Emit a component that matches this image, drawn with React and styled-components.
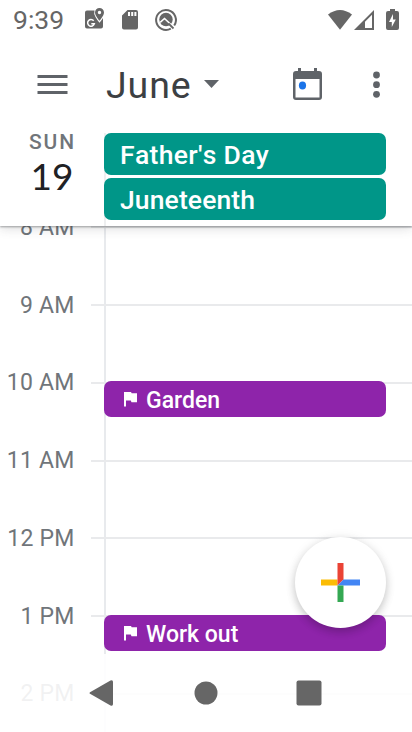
import React from "react";
import styled, { createGlobalStyle } from "styled-components";

const GlobalStyle = createGlobalStyle`
  * { box-sizing: border-box; }
  body { margin: 0; background: #fff; font-family: Roboto, "Liberation Sans", sans-serif; }
`;

const Screen = styled.main`
  position: relative;
  display: flex;
  flex-direction: column;
  width: 412px;
  height: 732px;
  overflow: hidden;
  background: #fff;
`;

const StatusBar = styled.div`
  display: flex;
  align-items: center;
  justify-content: space-between;
  flex: none;
  height: 40px;
  padding: 0 12px 0 13px;
  color: #666;
`;

const StatusGroup = styled.div`
  display: flex;
  align-items: center;
  svg { display: block; }
`;

const Clock = styled.span`
  width: 71px;
  font-size: 26.5px;
  line-height: 40px;
`;

const Toolbar = styled.header`
  display: flex;
  align-items: center;
  flex: none;
  height: 90px;
  padding-left: 37px;
`;

const IconButton = styled.button`
  display: block;
  flex: none;
  padding: 0;
  border: 0;
  background: none;
  color: #5f6368;
  line-height: 0;
  margin-left: ${(p) => p.$gap || 0}px;
`;

const MonthPicker = styled.div`
  display: flex;
  align-items: center;
  width: 185px;
  margin-left: 37px;
  gap: 12px;
  color: #3c4043;
  svg { margin: -2px 0 0 1px; }
`;

const Month = styled.h1`
  width: 86px;
  margin: 0;
  padding-left: 1px;
  font: 400 37.5px/40px Roboto, sans-serif;
  letter-spacing: 0.9px;
  white-space: nowrap;
`;

const DayHeader = styled.section`
  position: relative;
  z-index: 1;
  display: flex;
  flex: none;
  height: 96px;
  background: #fff;
  box-shadow: 0 1px 2px rgba(60, 64, 67, 0.45), 0 3px 10px rgba(60, 64, 67, 0.16);
  clip-path: inset(0 0 -20px 0);
`;

const DateBlock = styled.div`
  display: flex;
  flex-direction: column;
  align-items: center;
  width: 104px;
`;

const Weekday = styled.span`
  height: 24px;
  font-size: 21px;
  font-weight: 500;
  line-height: 24px;
  letter-spacing: 1.8px;
  color: #70757a;
  padding-left: 1px;
`;

const DayNumber = styled.span`
  font: 400 37px/44px Lato, sans-serif;
  color: #202124;
`;

const AllDay = styled.div`
  display: flex;
  flex-direction: column;
  gap: 3px;
  width: 282px;
  height: 93px;
  margin-top: 3px;
  background: linear-gradient(#eeeff0, #eeeff0) 0 0 / 2px 100% no-repeat;
`;

const AllDayEvent = styled.div`
  height: 42px;
  padding-left: 16px;
  border-radius: 7px;
  background: #009688;
  color: #fff;
  font-size: 26.5px;
  font-weight: 500;
  font-kerning: none;
  letter-spacing: ${(p) => p.$tracking}px;
  line-height: 43.5px;
`;

const Timeline = styled.section`
  position: relative;
  flex: 1;
  min-height: 0;
  overflow: hidden;
  background: linear-gradient(#e8eaed, #e8eaed) 104px 0 / 2px 100% no-repeat;
`;

const HourRow = styled.div`
  display: flex;
  justify-content: space-between;
  height: 77.75px;
`;

const HourLabel = styled.span`
  width: 74.5px;
  height: 30px;
  margin-top: -13.25px;
  text-align: right;
  color: #70757a;
  font-size: 23px;
  line-height: 30px;
  letter-spacing: 0.2px;
`;

const HourLine = styled.div`
  width: 321px;
  height: 2px;
  margin-top: 0.25px;
  background: #e9eaec;
`;

const TimedEvent = styled.div`
  position: absolute;
  left: 104px;
  top: ${(p) => p.$top}px;
  display: flex;
  align-items: center;
  gap: 9px;
  width: 282px;
  height: 36px;
  padding: 3px 0 0 19px;
  border-radius: 7px;
  background: #8e24aa;
  color: #fff;
  font-size: 23px;
  font-weight: 500;
  line-height: 38px;
  svg { margin-top: -3px; }
`;

const AddButton = styled.button`
  position: absolute;
  left: 295px;
  top: 537px;
  display: grid;
  place-items: center;
  width: 91px;
  height: 91px;
  padding: 0;
  border: 0;
  border-radius: 50%;
  background: #fff;
  box-shadow: 0 4px 8px rgba(0, 0, 0, 0.18), 0 1px 12px rgba(0, 0, 0, 0.08);
  z-index: 3;
`;

const NavBar = styled.nav`
  position: absolute;
  z-index: 2;
  left: 0;
  bottom: 0;
  display: flex;
  align-items: center;
  width: 412px;
  height: 78px;
  padding-left: 89px;
  background: rgba(255, 255, 255, 0.9);
  svg { display: block; }
  svg:nth-child(2) { margin: 0 78px 0 81px; }
`;

const HOURS = ["8 AM", "9 AM", "10 AM", "11 AM", "12 PM", "1 PM", "2 PM"];
const EVENTS = [
  { title: "Garden", top: 155 },
  { title: "Work out", top: 389 },
];

const Flag = () => (
  <svg width="14" height="16" viewBox="0 0 14 16" fill="#fff">
    <path d="M1 1h7l.7 1.200H14v9H8.500L7.800 9.500H3v6H1z" />
  </svg>
);

const StatusIcons = () => (
  <svg width="96" height="26" viewBox="84 7 96 26" fill="#666">
    <path d="M87 10.500h7.500q-1 3 1 6.500 1.600 3 4 5.800 2-2.300 3.500-4.800v8.500q0 2-2 2H87q-2 0-2-2v-14q0-2 2-2z" />
    <path fillRule="evenodd" d="M99.500 8a4.500 4.500 0 0 1 4.500 4.500c0 3.200-4.500 8.300-4.500 8.300S95 15.700 95 12.500A4.500 4.500 0 0 1 99.500 8zm0 2.800a1.700 1.700 0 1 0 0 3.400 1.700 1.700 0 0 0 0-3.400z" />
    <path d="M93.700 20.700a3.400 3.400 0 1 0 .6 3.100H91.300" fill="none" stroke="#fff" strokeWidth="1.500" />
    <path fillRule="evenodd" d="M127.500 10H136q2 0 2 2v15.500q0 2-2 2h-12q-2 0-2-2V15.500zM128 12v4h2v-4zm3.200 0v4h2v-4zm3.200 0v4h2v-4z" />
    <path d="M174.200 25.500A9.900 9.900 0 1 0 170.800 28.600" fill="none" stroke="#666" strokeWidth="2" />
    <circle cx="166" cy="19.500" r="6.700" />
    <path d="M160.200 22.300l4.300-3.800 8 7.500" fill="none" stroke="#fff" strokeWidth="1.600" />
    <path d="M168.500 23.500l5 5" stroke="#666" strokeWidth="1.800" />
  </svg>
);

const SystemIcons = () => (
  <svg width="76" height="24" viewBox="324 7 76 24" fill="#666">
    <path d="M328 13.500Q340 4.500 352 13.500L340 28.700z" />
    <path fillRule="evenodd" d="M354 29l20-20v20zm11-8.200V27h7V13.800z" />
    <path fillRule="evenodd" d="M390 8h5v2h2q2 0 2 2v15q0 2-2 2h-9q-2 0-2-2V12q0-2 2-2h2zM393 13l-4 8h2.800v5l4-7.500H393z" />
  </svg>
);

const MenuIcon = () => (
  <svg width="31" height="22" viewBox="0 0 31 22">
    <path d="M0.500 2.500H30.500M0.500 10.500H30.500M0.500 18.500H30.500" stroke="#5f6368" strokeWidth="3" />
  </svg>
);

const TodayIcon = () => (
  <svg width="31" height="34" viewBox="0 0 31 34">
    <path fill="#5f6368" fillRule="evenodd" d="M6 0h3v3h13V0h3v3h2q3 0 3 3v23q0 3-3 3H4q-3 0-3-3V6q0-3 3-3h2zM3.500 11v18.500h24V11z" />
    <ellipse cx="10.500" cy="17.500" rx="3.600" ry="4" fill="#1a73e8" />
  </svg>
);

const MoreIcon = () => (
  <svg width="8" height="28" viewBox="0 0 8 28" fill="#5f6368">
    <circle cx="4.500" cy="4" r="3.400" />
    <circle cx="4.500" cy="13.700" r="3.400" />
    <circle cx="4.500" cy="23.300" r="3.400" />
  </svg>
);

export default function App() {
  return (
    <Screen>
      <GlobalStyle />
      <StatusBar>
        <StatusGroup>
          <Clock>9:39</Clock>
          <StatusIcons />
        </StatusGroup>
        <StatusGroup>
          <SystemIcons />
        </StatusGroup>
      </StatusBar>
      <Toolbar>
        <IconButton aria-label="Menu"><MenuIcon /></IconButton>
        <MonthPicker>
          <Month>June</Month>
          <svg width="15" height="8" viewBox="0 0 15 8"><path d="M0 0h15L7.500 8z" fill="#5f6368" /></svg>
        </MonthPicker>
        <IconButton $gap={2} aria-label="Today"><TodayIcon /></IconButton>
        <IconButton $gap={49} aria-label="More options"><MoreIcon /></IconButton>
      </Toolbar>
      <DayHeader>
        <DateBlock>
          <Weekday>SUN</Weekday>
          <DayNumber>19</DayNumber>
        </DateBlock>
        <AllDay>
          <AllDayEvent $tracking={0.32}>Father's Day</AllDayEvent>
          <AllDayEvent $tracking={0.12}>Juneteenth</AllDayEvent>
        </AllDay>
      </DayHeader>
      <Timeline>
        {HOURS.map((hour) => (
          <HourRow key={hour}>
            <HourLabel>{hour}</HourLabel>
            <HourLine />
          </HourRow>
        ))}
        {EVENTS.map((event) => (
          <TimedEvent key={event.title} $top={event.top}>
            <Flag />
            {event.title}
          </TimedEvent>
        ))}
      </Timeline>
      <AddButton aria-label="Create">
        <svg width="39" height="39" viewBox="0 0 39 39">
          <path d="M0 16.500h16.500v6H0z" fill="#fbbc04" />
          <path d="M16.500 0h6v16.500l-6 6z" fill="#ea4335" />
          <path d="M22.500 16.500H39v6H16.500z" fill="#4285f4" />
          <path d="M16.500 22.500h6V39h-6z" fill="#34a853" />
        </svg>
      </AddButton>
      <NavBar>
        <svg width="24" height="26" viewBox="0 0 24 26"><path d="M1 12.200 21.500 .5Q24 -.5 24 2v22q0 2.500-2.500 1.500L1 13.800q-1-.8 0-1.600z" fill="#666" /></svg>
        <svg width="24" height="24" viewBox="0 0 24 24"><circle cx="12" cy="12" r="11.500" fill="#666" /></svg>
        <svg width="26" height="26" viewBox="0 0 26 26"><rect x=".5" y=".5" width="25" height="25" rx="2" fill="#666" /></svg>
      </NavBar>
    </Screen>
  );
}
